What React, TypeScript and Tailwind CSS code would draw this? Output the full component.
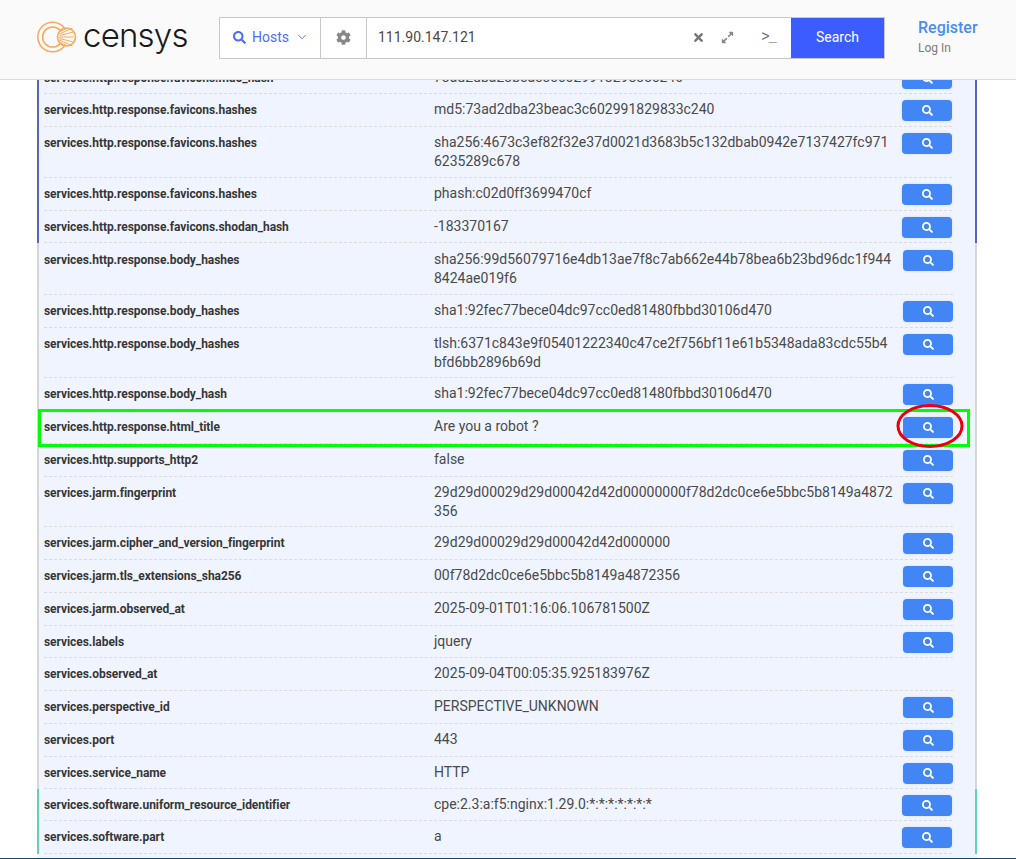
import { FaSearch, FaCog, FaTimes, FaExpandAlt } from 'react-icons/fa'
import { ChevronDown } from 'lucide-react'

interface Row {
  name: string
  value: string
  noButton?: boolean
  marked?: boolean
}

const faviconRows: Row[] = [
  { name: 'services.http.response.favicons.md5_hash', value: '73ad2dba23beac3c602991829833c240' },
  { name: 'services.http.response.favicons.hashes', value: 'md5:73ad2dba23beac3c602991829833c240' },
  { name: 'services.http.response.favicons.hashes', value: 'sha256:4673c3ef82f32e37d0021d3683b5c132dbab0942e7137427fc9716235289c678' },
  { name: 'services.http.response.favicons.hashes', value: 'phash:c02d0ff3699470cf' },
  { name: 'services.http.response.favicons.shodan_hash', value: '-183370167' },
]

const serviceRows: Row[] = [
  { name: 'services.http.response.body_hashes', value: 'sha256:99d56079716e4db13ae7f8c7ab662e44b78bea6b23bd96dc1f9448424ae019f6' },
  { name: 'services.http.response.body_hashes', value: 'sha1:92fec77bece04dc97cc0ed81480fbbd30106d470' },
  { name: 'services.http.response.body_hashes', value: 'tlsh:6371c843e9f05401222340c47ce2f756bf11e61b5348ada83cdc55b4bfd6bb2896b69d' },
  { name: 'services.http.response.body_hash', value: 'sha1:92fec77bece04dc97cc0ed81480fbbd30106d470' },
  { name: 'services.http.response.html_title', value: 'Are you a robot ?', marked: true },
  { name: 'services.http.supports_http2', value: 'false' },
  { name: 'services.jarm.fingerprint', value: '29d29d00029d29d00042d42d00000000f78d2dc0ce6e5bbc5b8149a4872356' },
  { name: 'services.jarm.cipher_and_version_fingerprint', value: '29d29d00029d29d00042d42d000000' },
  { name: 'services.jarm.tls_extensions_sha256', value: '00f78d2dc0ce6e5bbc5b8149a4872356' },
  { name: 'services.jarm.observed_at', value: '2025-09-01T01:16:06.106781500Z' },
  { name: 'services.labels', value: 'jquery' },
  { name: 'services.observed_at', value: '2025-09-04T00:05:35.925183976Z', noButton: true },
  { name: 'services.perspective_id', value: 'PERSPECTIVE_UNKNOWN' },
  { name: 'services.port', value: '443' },
  { name: 'services.service_name', value: 'HTTP' },
]

const softwareRows: Row[] = [
  { name: 'services.software.uniform_resource_identifier', value: 'cpe:2.3:a:f5:nginx:1.29.0:*:*:*:*:*:*:*' },
  { name: 'services.software.part', value: 'a' },
]

function DataRow({ row }: { row: Row }) {
  return (
    <div className="relative flex items-start border-b border-dashed border-[#dbdbdb] pt-[6px] pb-[4.76px]">
      <div className="w-[390px] shrink-0 pt-[1px] text-[12px] leading-[18px] font-bold tracking-[-0.06px] text-[#363636]">{row.name}</div>
      <div className="w-[460px] shrink-0 pb-[1px] text-[14px] leading-[19px] text-[#4a4a4a] break-all">{row.value}</div>
      <div className="ml-auto h-[21px] w-[50px] shrink-0">
        {!row.noButton && (
          <button className="flex h-[21px] w-[50px] items-center justify-center rounded-[4px] bg-[#4285f4] text-white shadow-[0_0_3px_#cfe0ff]">
            <FaSearch size={11} />
          </button>
        )}
      </div>
      {row.marked && (
        <>
          <div className="absolute left-[-6px] top-[-2px] h-[38px] w-[932px] border-[3px] border-[#00ff00]" />
          <svg className="absolute left-[851px] top-[-8px]" width="70" height="46" viewBox="0 0 70 46">
            <ellipse cx="35" cy="23" rx="32" ry="20.5" fill="none" stroke="#e8000d" strokeWidth="3" />
          </svg>
        </>
      )}
    </div>
  )
}

function Logo() {
  return (
    <div className="flex items-center gap-[6px]">
      <svg width="40" height="34" viewBox="0 0 40 34" fill="none" stroke="#fbaa5a" strokeWidth="1.6">
        <circle cx="15.6" cy="17" r="14.8" />
        <circle cx="15.6" cy="17" r="10" />
        <circle cx="29.5" cy="17" r="9" fill="#fafafa" />
        <path d="M22 17h15M22.5 14l13-6M22.5 20l13 6M23.5 11.5l6-3M23.5 22.5l6 3M22.5 15.5l14-3.5M22.5 18.5l14 3.5" strokeWidth="1" />
      </svg>
      <span className="relative top-[-2px] font-['Inter',sans-serif] text-[33px] leading-none font-light tracking-[-0.8px] text-[#1a1a1a]">censys</span>
    </div>
  )
}

export default function App() {
  return (
    <div className="flex h-[859px] flex-col overflow-hidden bg-white font-['Roboto',sans-serif]">
      {/* Header */}
      <header className="relative z-10 flex h-[80px] shrink-0 items-start border-b border-[#dbdbdb] bg-[#fafafa]">
        <div className="ml-[37px] mt-[20px] w-[182px]">
          <Logo />
        </div>
        <div className="mt-[17px] flex h-[42px] w-[666px] border border-[#c8c8c8] bg-white">
          <div className="flex w-[101px] items-center gap-[6px] border-r border-[#c8c8c8] pb-[2px] pl-[13px] text-[14px] text-[#4f6cf7]">
            <FaSearch size={13} />
            <span>Hosts</span>
            <ChevronDown size={14} strokeWidth={1.6} />
          </div>
          <div className="flex w-[46px] items-center justify-center border-r border-[#c8c8c8] pb-[2px] text-[#888888]">
            <FaCog size={15} />
          </div>
          <div className="flex flex-1 items-center pb-[2px] pl-[11px] text-[14px] text-[#4a4a4a]">
            <span className="flex-1">111.90.147.121</span>
            <FaTimes size={13} className="text-[#777777]" />
            <FaExpandAlt size={13} className="ml-[16px] text-[#888888]" />
            <span className="ml-[27px] mr-[15px] font-['Liberation_Mono',monospace] text-[14px] leading-none tracking-[-1px] text-[#666666]">&gt;_</span>
          </div>
          <button className="w-[93px] bg-[#3c5cff] pb-[2px] text-[14px] text-white">Search</button>
        </div>
        <div className="ml-[33px] mt-[17px] flex flex-col">
          <a className="text-[16px] leading-[21px] font-medium text-[#4a8bf5]">Register</a>
          <a className="mt-[2px] text-[12px] leading-[16px] text-[#7a7a7a]">Log In</a>
        </div>
      </header>

      {/* Property table, scrolled under the header */}
      <main className="ml-[37px] mt-[-18.5px] h-[796.5px] w-[940px] shrink-0 overflow-hidden bg-[#f0f4ff]">
        <section className="border-x-2 border-[#5565b8] pr-[23px] pl-[5px]">
          {faviconRows.map((row, i) => (
            <DataRow key={i} row={row} />
          ))}
        </section>
        <section className="mb-[-0.8px] border-x-2 border-[#d6d6d6] pt-[0.8px] pr-[22px] pl-[5px]">
          {serviceRows.map((row, i) => (
            <DataRow key={i} row={row} />
          ))}
        </section>
        <section className="border-x-2 border-[#5dd6b5] pr-[23px] pl-[5px]">
          {softwareRows.map((row, i) => (
            <DataRow key={i} row={row} />
          ))}
        </section>
      </main>
      <div className="relative z-10 h-[1px] shrink-0 bg-[#0f4c81]" />
    </div>
  )
}
